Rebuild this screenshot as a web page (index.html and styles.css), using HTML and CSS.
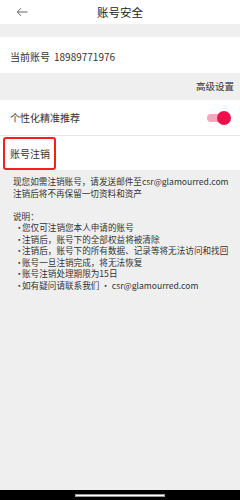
FILE: index.html
```html
<!DOCTYPE html>
<html lang="zh">
<head>
<meta charset="utf-8">
<link rel="stylesheet" href="styles.css">
</head>
<body>
<div class="page">
  <header class="topbar">
    <svg class="back" width="12" height="10" viewBox="0 0 12 10"><path d="M11.5 5H1.2M5 1.2L1.2 5L5 8.8" fill="none" stroke="#666" stroke-width="1"/></svg>
    <div class="title">账号安全</div>
  </header>
  <div class="spacer"></div>
  <div class="row account"><span>当前账号</span><span class="num">18989771976</span></div>
  <div class="advanced">高级设置</div>
  <div class="row pref">
    <span>个性化精准推荐</span>
    <span class="toggle"><span class="track"></span><span class="knob"></span></span>
  </div>
  <div class="row cancel"><div class="cancel-box">账号注销</div></div>
  <div class="notes">
    <p>现您如需注销账号，请发送邮件至csr@glamourred.com</p>
    <p>注销后将不再保留一切资料和资产</p>
    <p class="blank">&nbsp;</p>
    <p>说明：</p>
    <ul>
      <li>您仅可注销您本人申请的账号</li>
      <li>注销后，账号下的全部权益将被清除</li>
      <li>注销后，账号下的所有数据、记录等将无法访问和找回</li>
      <li>账号一旦注销完成，将无法恢复</li>
      <li>账号注销处理期限为15日</li>
      <li>如有疑问请联系我们 · csr@glamourred.com</li>
    </ul>
  </div>
  <div class="navbar"><div class="home"></div></div>
</div>
</body>
</html>
```

FILE: styles.css
```css
* { box-sizing: border-box; margin: 0; padding: 0; }
html, body { width: 240px; height: 500px; }
body {
  background: #efefef;
  font-family: "Noto Sans CJK SC", "Noto Sans", sans-serif;
  color: #333;
}
.page { height: 500px; display: flex; flex-direction: column; }
.topbar {
  height: 24px; background: #fff; position: relative;
  display: flex; align-items: center; justify-content: center;
}
.back { position: absolute; left: 16px; top: 7px; }
.title { font-size: 11.5px; color: #222; line-height: 24px; }
.spacer { height: 13px; }
.row { background: #fff; display: flex; align-items: center; font-size: 10px; color: #333; }
.account { height: 36px; padding-left: 10px; padding-top: 2px; }
.account .num { margin-left: 4px; }
.advanced {
  height: 27px; font-size: 9.5px; color: #333; text-align: right;
  padding-right: 6px; line-height: 27px;
}
.pref {
  height: 36px; padding-left: 10px; justify-content: space-between;
  border-bottom: 1px solid #e6e6e6;
}
.toggle { position: relative; width: 24px; height: 14px; margin-right: 9px; }
.track {
  position: absolute; left: 0; top: 3px; width: 22px; height: 8px;
  border-radius: 4px; background: #f7a6bd;
}
.knob {
  position: absolute; right: 0; top: 0; width: 14px; height: 14px;
  border-radius: 50%; background: #f10f4b;
}
.cancel { height: 34px; align-items: stretch; padding-left: 3px; }
.cancel-box {
  width: 53px; margin-top: 1px; border: 2px solid #f5201a; border-radius: 3px;
  display: flex; align-items: center; padding-left: 5px; font-size: 10px; color: #333;
}
.notes {
  flex: 1; padding: 6px 0 0 13px; font-size: 8.6px; line-height: 11.5px; color: #333;
}
.notes ul { list-style: none; }
.notes li { position: relative; padding-left: 9px; }
.notes li::before { content: "·"; position: absolute; left: 2px; top: 0; }
.navbar {
  height: 10px; background: #000; display: flex; justify-content: center; align-items: flex-start;
}
.home { width: 90px; height: 3px; margin-top: 4px; background: #fff; border: 0.5px solid #999; }
```
